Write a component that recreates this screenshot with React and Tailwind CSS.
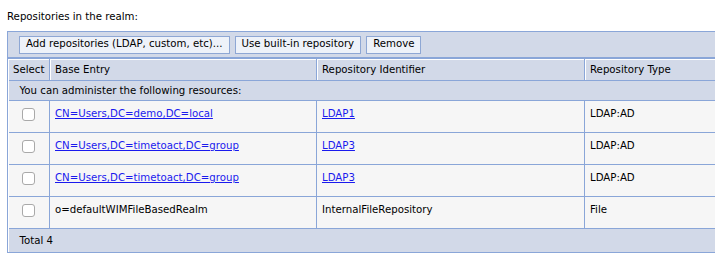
import React from 'react'

const rows = [
  { base: 'CN=Users,DC=demo,DC=local', id: 'LDAP1', type: 'LDAP:AD', link: true },
  { base: 'CN=Users,DC=timetoact,DC=group', id: 'LDAP3', type: 'LDAP:AD', link: true },
  { base: 'CN=Users,DC=timetoact,DC=group', id: 'LDAP3', type: 'LDAP:AD', link: true },
  { base: 'o=defaultWIMFileBasedRealm', id: 'InternalFileRepository', type: 'File', link: false },
]

function Btn({ children }) {
  return (
    <button className="h-[18px] px-[6px] bg-[#eef2f9] border border-[#8ea7d4] text-[10.2px] leading-none text-black">
      {children}
    </button>
  )
}

export default function App() {
  return (
    <div className="w-[715px] h-[265px] overflow-hidden bg-white text-[10.2px] text-black" style={{ fontFamily: '"DejaVu Sans", Verdana, sans-serif' }}>
      <div className="pl-[7px] pt-[9px] h-[31px]">Repositories in the realm:</div>
      <div className="ml-[7px] w-[730px] border border-[#8aa6d8]">
        <div className="flex gap-[5px] items-center h-[27px] pl-[11px] bg-[#d2d9e8] border-b-2 border-[#8aa6d8]">
          <Btn>Add repositories (LDAP, custom, etc)...</Btn>
          <Btn>Use built-in repository</Btn>
          <Btn>Remove</Btn>
        </div>
        <table className="w-full border-collapse table-fixed">
          <colgroup>
            <col className="w-[41px]" />
            <col className="w-[267px]" />
            <col className="w-[268px]" />
            <col />
          </colgroup>
          <thead>
            <tr className="h-[21px] bg-[#d2d9e8] border-t border-white border-b border-b-[#8aa6d8] text-left">
              <th className="font-normal px-[4px] border-l border-white">Select</th>
              <th className="font-normal px-[5px] border-l border-[#8aa6d8] shadow-[inset_1px_0_0_#ffffff]">Base Entry</th>
              <th className="font-normal px-[5px] border-l border-[#8aa6d8] shadow-[inset_1px_0_0_#ffffff]">Repository Identifier</th>
              <th className="font-normal px-[5px] border-l border-[#8aa6d8] shadow-[inset_1px_0_0_#ffffff]">Repository Type</th>
            </tr>
          </thead>
          <tbody>
            <tr className="h-[20px] bg-[#d2d9e8] border-t border-white border-b border-b-[#8aa6d8]">
              <td colSpan={4} className="pl-[11px]">You can administer the following resources:</td>
            </tr>
            {rows.map((r, i) => (
              <tr key={i} className="h-[32px] bg-[#f6f6f6] border-b border-[#8aa6d8] align-top">
                <td className="pt-[7px] text-center">
                  <input type="checkbox" className="w-[13px] h-[13px] appearance-none bg-white border border-[#a9a9a9] rounded-[3px] align-top" />
                </td>
                <td className="pt-[5px] pl-[5px] border-l border-[#8aa6d8]">
                  {r.link ? <a href="#" className="text-[#1a1aee] underline">{r.base}</a> : r.base}
                </td>
                <td className="pt-[5px] pl-[5px] border-l border-[#8aa6d8]">
                  {r.link ? <a href="#" className="text-[#1a1aee] underline">{r.id}</a> : r.id}
                </td>
                <td className="pt-[5px] pl-[5px] border-l border-[#8aa6d8]">{r.type}</td>
              </tr>
            ))}
            <tr className="h-[23px] bg-[#d2d9e8]">
              <td colSpan={4} className="pl-[11px]">Total 4</td>
            </tr>
          </tbody>
        </table>
      </div>
    </div>
  )
}
